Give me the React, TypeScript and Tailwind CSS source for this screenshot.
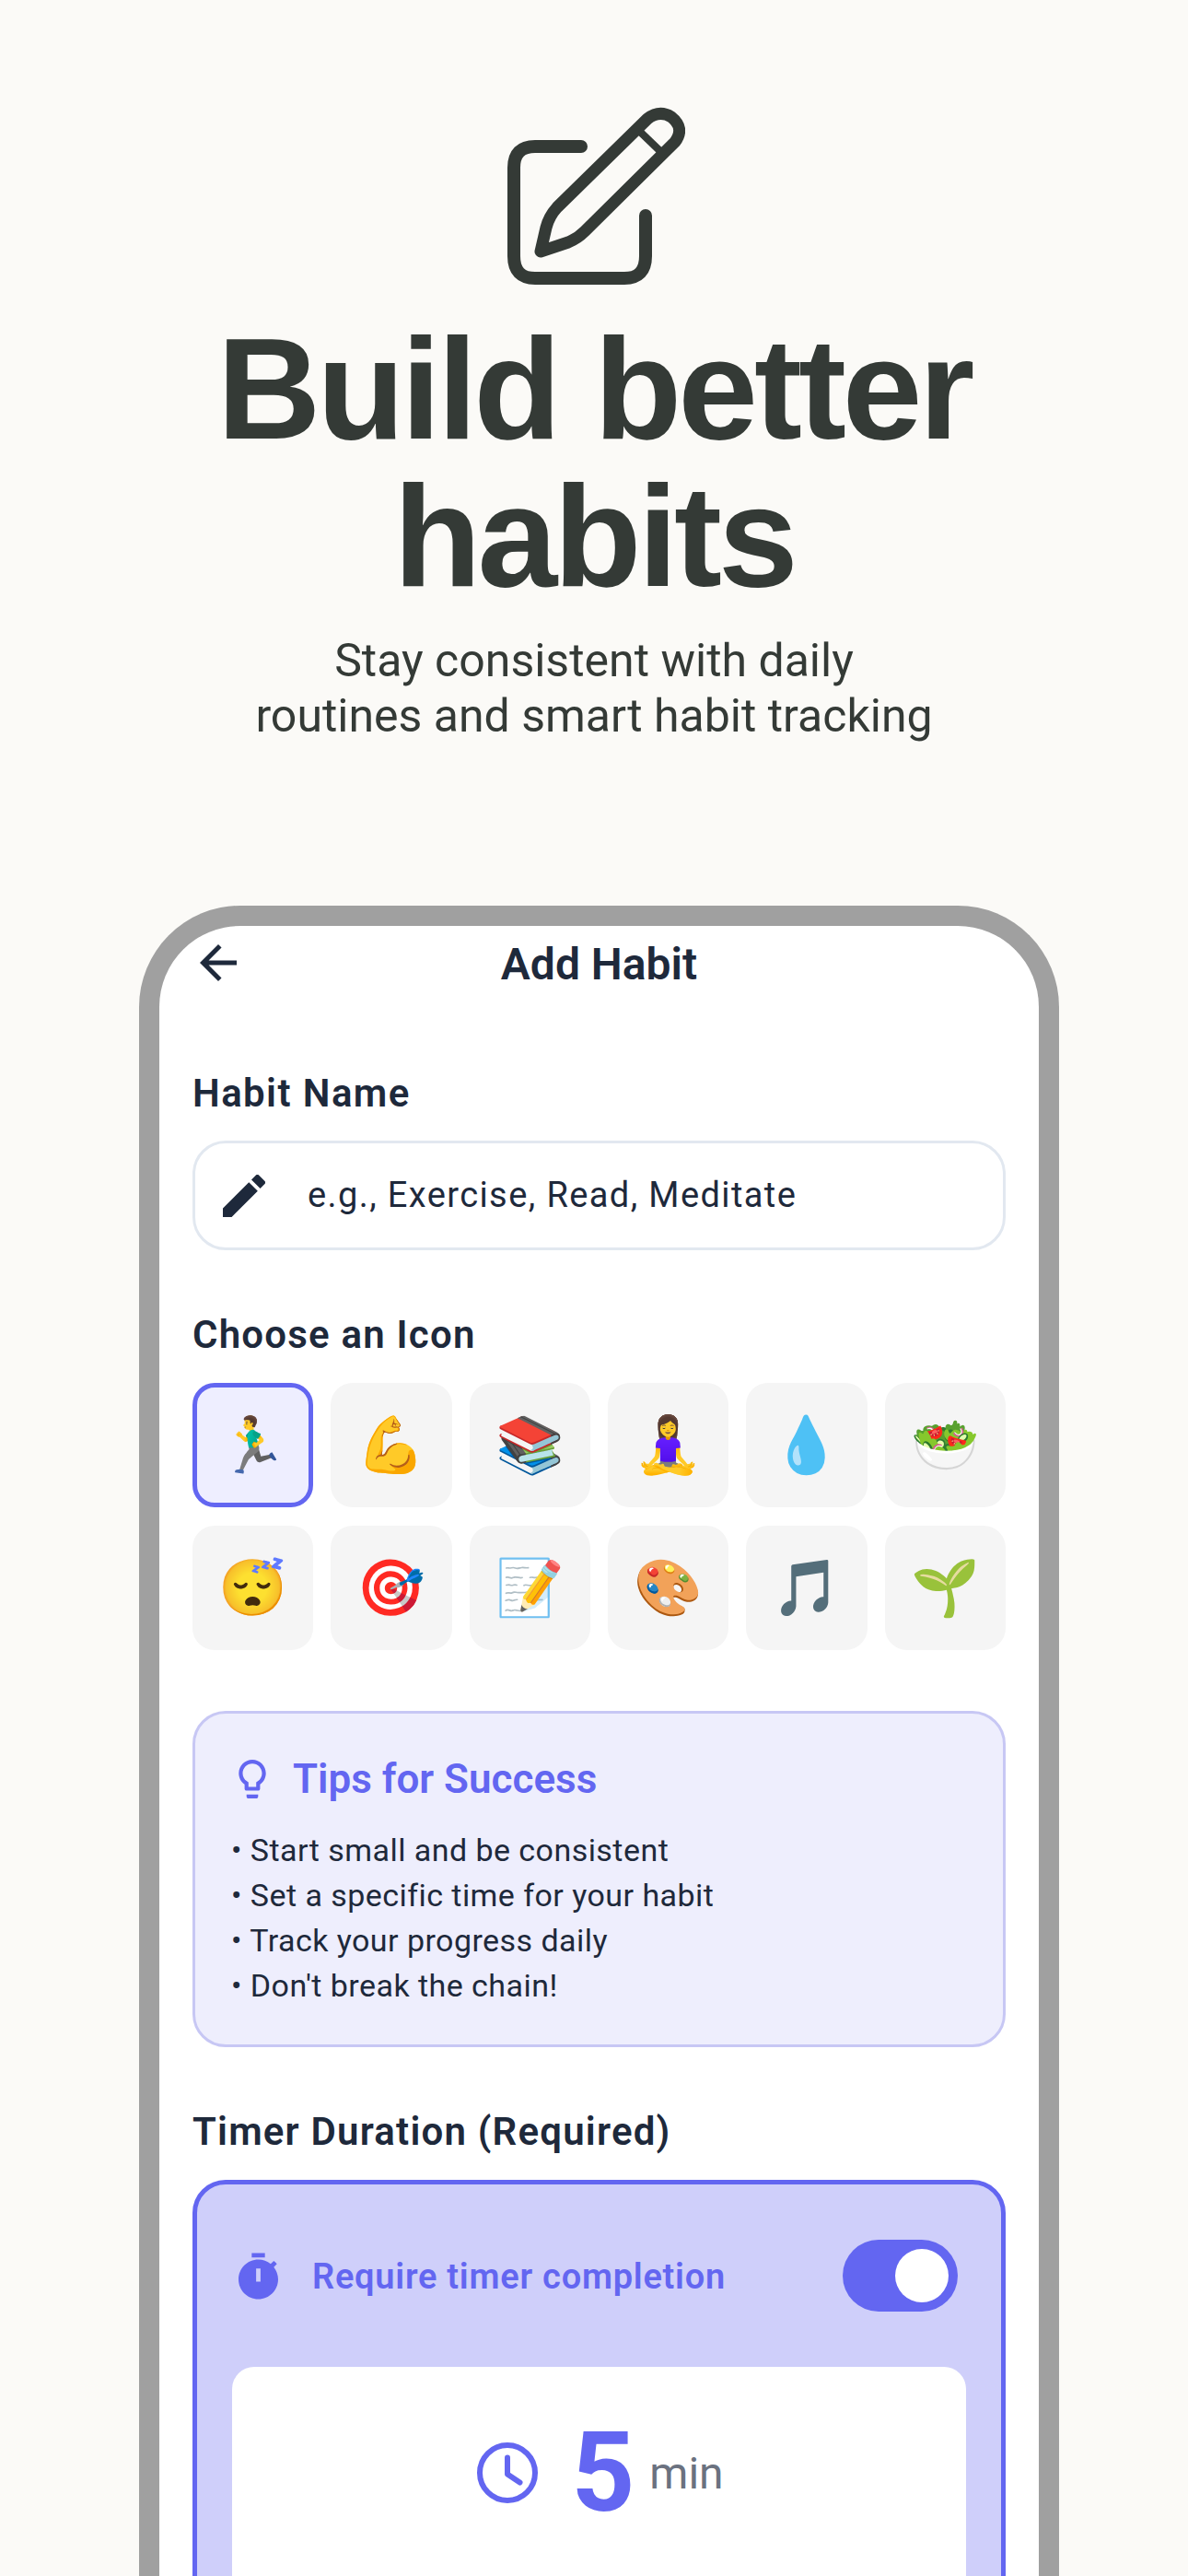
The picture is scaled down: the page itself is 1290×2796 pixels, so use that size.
import React from "react";

const emojis = ["🏃‍♂️", "💪", "📚", "🧘‍♀️", "💧", "🥗", "😴", "🎯", "📝", "🎨", "🎵", "🌱"];
const tips = ["Start small and be consistent", "Set a specific time for your habit", "Track your progress daily", "Don't break the chain!"];

const App: React.FC = () => {
  return (
    <div className="h-[2796px] w-[1290px] overflow-hidden bg-[#fbfaf7] font-['Roboto',sans-serif]">
      {/* Hero */}
      <div className="flex flex-col items-center pt-[116px] text-[#343a36]">
        <svg viewBox="0 0 193 193" className="ml-[4px] h-[193px] w-[193px]" fill="none" stroke="currentColor" strokeLinecap="round" strokeLinejoin="round">
          <path strokeWidth="14" d="M80 43H30Q7 43 7 66V162Q7 186 30 186H127Q150 186 150 162V118" />
          <path strokeWidth="13" d="M36 157L42 131Q45 119 54 109L152 13Q165 3 178 11Q193 23 182 38L84 135Q76 143 66 147Z" />
          <path strokeWidth="8" strokeLinecap="butt" d="M143 26L170 52" />
        </svg>
        <h1 className="mt-[33px] text-center font-['Liberation_Sans',sans-serif] text-[156px] leading-[160px] font-bold tracking-[-4px]">
          Build better
          <br />
          habits
        </h1>
        <p className="mt-[25px] text-center text-[50px] leading-[60px] text-[#343a36]">
          Stay consistent with daily
          <br />
          routines and smart habit tracking
        </p>
      </div>

      {/* Phone */}
      <div className="mt-[176px] ml-[151px] w-[999px] rounded-t-[110px] border-[22px] border-b-0 border-[#a0a0a0] bg-white px-[36px] text-[#1e293b]">
        <div className="relative flex h-[84px] items-center justify-center">
          <svg viewBox="4 4 16 16" className="absolute top-[20px] left-[8px] h-[40px] w-[40px]" fill="currentColor">
            <path d="M20 11H7.83l5.59-5.59L12 4l-8 8 8 8 1.41-1.41L7.83 13H20v-2z" />
          </svg>
          <span className="text-[48px] font-semibold">Add Habit</span>
        </div>

        <div className="mt-[73px] text-[42px] leading-[50px] font-semibold tracking-[1.4px]">Habit Name</div>
        <div className="mt-[26px] flex h-[119px] items-center rounded-[36px] border-[3px] border-[#e2e8f0] pl-[30px]">
          <svg viewBox="3 3 18 18" className="h-[46px] w-[46px]" fill="currentColor">
            <path d="M3 17.25V21h3.75L17.81 9.94l-3.75-3.75L3 17.25zM20.71 7.04a1 1 0 0 0 0-1.41l-2.34-2.34a1 1 0 0 0-1.41 0l-1.83 1.83 3.75 3.75 1.83-1.83z" />
          </svg>
          <span className="ml-[46px] text-[38px] tracking-[1.4px]">e.g., Exercise, Read, Meditate</span>
        </div>

        <div className="mt-[67px] text-[42px] leading-[50px] font-semibold tracking-[1.2px]">Choose an Icon</div>
        <div className="mt-[27px] grid grid-cols-6 gap-x-[19px] gap-y-[20px]">
          {emojis.map((e, i) => (
            <div key={e} className={i === 0 ? "flex h-[135px] items-center justify-center rounded-[24px] border-[5px] border-[#6366f1] bg-[#eeeeff] text-[60px]" : "flex h-[135px] items-center justify-center rounded-[24px] bg-[#f5f5f5] text-[60px]"}>
              {e}
            </div>
          ))}
        </div>

        <div className="mt-[66px] h-[365px] rounded-[36px] border-[3px] border-[#c7c7f4] bg-[#eeeefd] pt-[45px] pl-[39px]">
          <div className="flex items-center">
            <svg viewBox="5 2 14 20" className="ml-[8px] h-[42px] w-[30px] text-[#6366f1]" fill="currentColor">
              <path d="M9 21c0 .55.45 1 1 1h4c.55 0 1-.45 1-1v-1H9v1zm3-19C8.14 2 5 5.14 5 9c0 2.38 1.19 4.47 3 5.74V17c0 .55.45 1 1 1h6c.55 0 1-.45 1-1v-2.26c1.81-1.27 3-3.36 3-5.74 0-3.86-3.14-7-7-7zm2.85 11.1l-.85.6V16h-4v-2.3l-.85-.6C7.8 12.16 7 10.63 7 9c0-2.76 2.24-5 5-5s5 2.24 5 5c0 1.63-.8 3.16-2.15 4.1z" />
            </svg>
            <span className="ml-[29px] text-[44px] leading-[52px] font-semibold text-[#6366f1]">Tips for Success</span>
          </div>
          <div className="mt-[27px] text-[34px] leading-[49px] tracking-[0.45px] text-[#1e293b]">
            {tips.map((t) => (
              <div key={t}>• {t}</div>
            ))}
          </div>
        </div>

        <div className="mt-[67px] text-[42px] leading-[50px] font-semibold tracking-[1.2px]">Timer Duration (Required)</div>
        <div className="mt-[27px] h-[600px] rounded-[36px] border-[5px] border-[#6366f1] bg-[#cfcffa] px-[38px] pt-[60px]">
          <div className="flex h-[78px] items-center justify-between">
            <div className="ml-[7px] flex items-center">
              <svg viewBox="3 1 18 21" className="h-[51px] w-[43px] text-[#6366f1]" fill="currentColor" fillRule="evenodd">
                <path d="M15 1H9v2h6V1zm-4 13h2V8h-2v6zm8.03-6.61l1.42-1.42c-.43-.51-.9-.99-1.41-1.41l-1.42 1.42C16.07 4.74 14.12 4 12 4c-4.97 0-9 4.03-9 9s4.02 9 9 9 9-4.03 9-9c0-2.12-.74-4.07-1.97-5.61z" />
              </svg>
              <span className="mt-[2px] ml-[37px] text-[38px] font-semibold tracking-[0.75px] text-[#6366f1]">Require timer completion</span>
            </div>
            <div className="mr-[9px] flex h-[78px] w-[125px] items-center justify-end rounded-full bg-[#6366f1] pr-[10px]">
              <div className="h-[58px] w-[58px] rounded-full bg-white" />
            </div>
          </div>
          <div className="mt-[60px] flex h-[400px] items-start justify-center rounded-[24px] bg-white pt-[50px]">
            <svg viewBox="0 0 24 24" className="mt-[29px] h-[72px] w-[72px] text-[#6366f1]" fill="none" stroke="currentColor" strokeWidth="2">
              <circle cx="12" cy="12" r="10" />
              <path strokeLinecap="round" strokeLinejoin="round" d="M12 6.5V12.5L16.5 15.5" />
            </svg>
            <span className="ml-[33px] text-[120px] leading-[130px] font-bold text-[#6366f1]">5</span>
            <span className="mt-[37px] ml-[16px] text-[48px] leading-[58px] text-[#6b7280]">min</span>
          </div>
        </div>
      </div>
    </div>
  );
};

export default App;
